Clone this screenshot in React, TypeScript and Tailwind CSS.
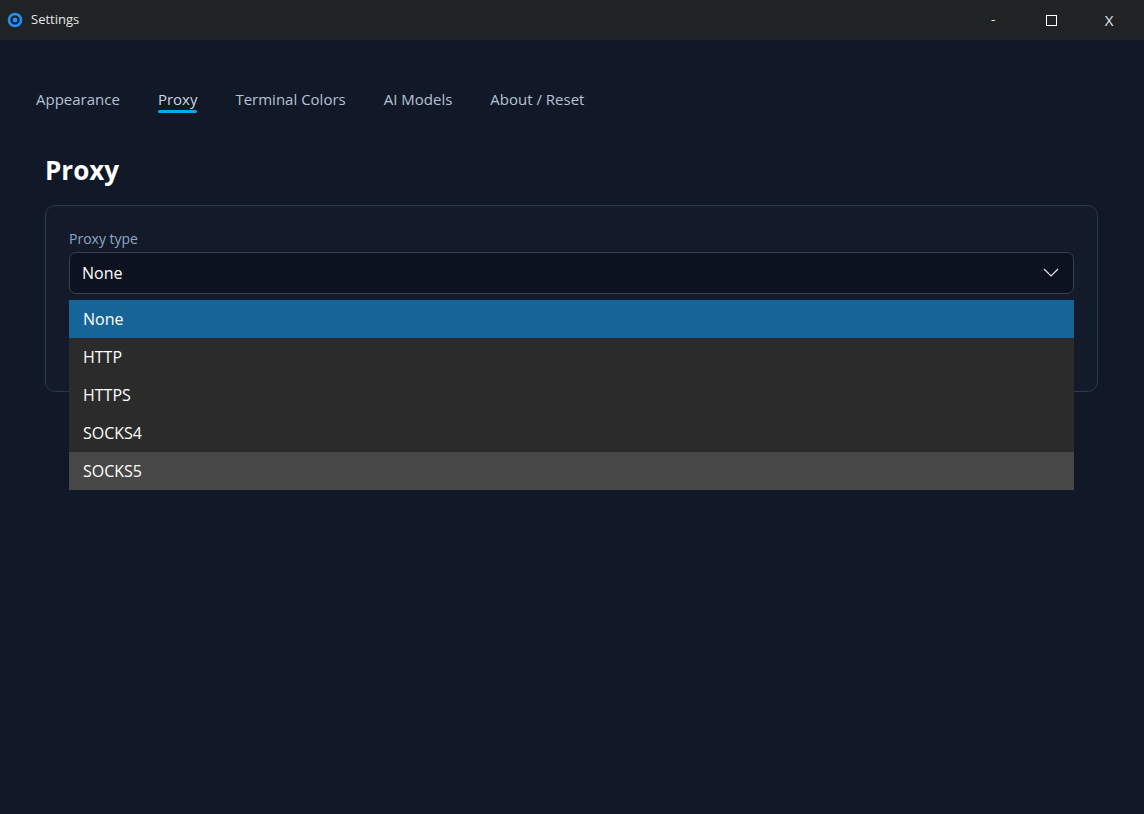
import React from 'react';

const tabs = ['Appearance', 'Proxy', 'Terminal Colors', 'AI Models', 'About / Reset'];
const options = ['None', 'HTTP', 'HTTPS', 'SOCKS4', 'SOCKS5'];

export default function App() {
    return (
        <div className="w-[1144px] h-[814px] bg-[#111827] flex flex-col text-white" style={{ fontFamily: '"Open Sans", "Noto Sans", sans-serif' }}>
            {/* title bar */}
            <div className="h-10 bg-[#202324] flex items-center shrink-0">
                <svg width="16" height="16" viewBox="0 0 16 16" className="ml-[7px]">
                    <circle cx="8" cy="8" r="6" fill="none" stroke="#1e90ff" strokeWidth="2.6" />
                    <circle cx="8" cy="8" r="2.4" fill="#1e90ff" />
                </svg>
                <span className="ml-2 text-[13px] text-[#e5e5e5]">Settings</span>
                <div className="ml-auto flex items-center h-full">
                    <span className="w-[70px] text-center text-[13px] text-white">-</span>
                    <span className="w-[46px] flex justify-center"><span className="block w-[11px] h-[11px] border border-white" /></span>
                    <span className="w-[70px] text-center text-[15px] text-[#e5e5e5]">X</span>
                </div>
            </div>

            {/* tabs */}
            <div className="flex gap-[38px] pl-9 pt-[48px] text-[15px] text-[#b6c2d4]">
                {tabs.map(t => (
                    <span key={t} className={t === 'Proxy' ? 'relative text-[#cbd5e1]' : ''}>
                        {t}
                        {t === 'Proxy' && <span className="absolute left-0 right-0 -bottom-[2px] h-[3px] bg-[#0ea5e9] rounded-sm" />}
                    </span>
                ))}
            </div>

            <div className="px-[45px] pt-[46px]">
                <h1 className="text-[26px] font-bold leading-none">Proxy</h1>

                <div className="relative mt-[22px] h-[187px] w-[1053px] rounded-[10px] border border-[#2a3850] bg-[#131a29] px-[23px] pt-[26px]">
                    <div className="text-[14px] text-[#8ea6c4] leading-none">Proxy type</div>
                    <div className="mt-[6px] h-[42px] w-[1005px] rounded-[7px] border border-[#334155] bg-[#0c1220] flex items-center px-3 text-[16px] text-white">
                        None
                        <svg width="16" height="10" viewBox="0 0 16 10" className="ml-auto mr-[2px]">
                            <path d="M1 1 L8 8 L15 1" fill="none" stroke="#e5e7eb" strokeWidth="1.2" />
                        </svg>
                    </div>
                    <div className="absolute left-[23px] top-[94px] w-[1005px] z-10 flex flex-col text-[16px]">
                        {options.map((o, i) => (
                            <div
                                key={o}
                                className={`h-[38px] flex items-center px-[14px] ${i === 0 ? 'bg-[#176498]' : i === 4 ? 'bg-[#474747]' : 'bg-[#2b2b2b]'}`}
                            >
                                {o}
                            </div>
                        ))}
                    </div>
                </div>
            </div>
        </div>
    );
}
